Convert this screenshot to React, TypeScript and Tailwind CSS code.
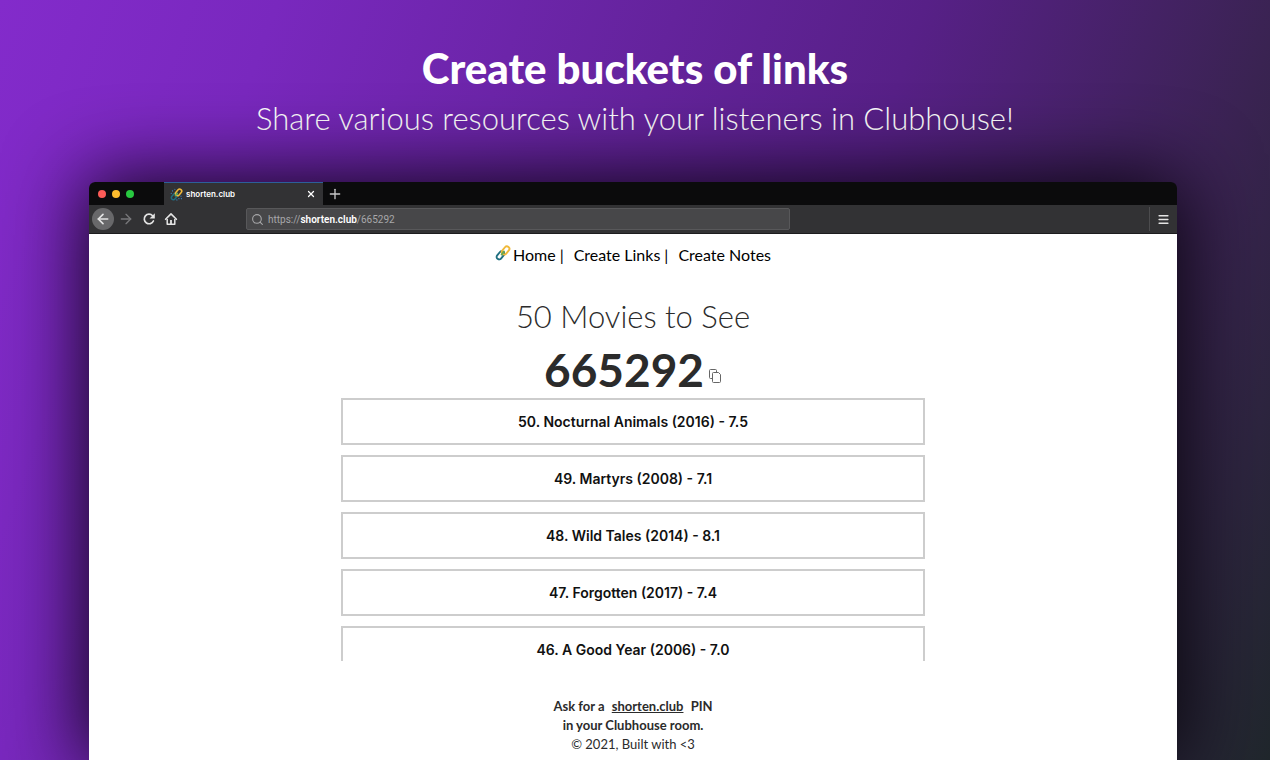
import { ArrowLeft, ArrowRight, Menu, Plus, Search, X } from "lucide-react";

const movies = [
  "50. Nocturnal Animals (2016) - 7.5",
  "49. Martyrs (2008) - 7.1",
  "48. Wild Tales (2014) - 8.1",
  "47. Forgotten (2017) - 7.4",
  "46. A Good Year (2006) - 7.0",
];

function ChainIcon({ className, sparks }: { className?: string; sparks?: boolean }) {
  return (
    <svg viewBox="0 0 16 16" fill="none" strokeWidth="1.9" className={className} aria-hidden="true">
      <rect x="0.9" y="7.9" width="9" height="5" rx="2.5" transform="rotate(-50 5.4 10.4)" stroke="#1f6f80" />
      <rect x="6.1" y="2.9" width="9" height="5" rx="2.5" transform="rotate(-50 10.6 5.4)" stroke="#f0b93a" />
      <path d="M6.6 9.6 9 6.6" stroke="#6aa84f" strokeLinecap="round" />
      {sparks && (
        <path
          d="M3 3.5v.1M6 1.5v.1M1.5 6.5v.1M13.5 10v.1M11 13v.1M8.5 14.6v.1M14 13v.1"
          stroke="#3a8fd0"
          strokeWidth="1.4"
          strokeLinecap="round"
        />
      )}
    </svg>
  );
}

function CopyIcon() {
  return (
    <svg viewBox="0 0 14 16" fill="none" stroke="#666" className="h-4 w-[14px]" aria-hidden="true">
      <path d="M4.5 10.5h-2a1 1 0 0 1-1-1v-7a1 1 0 0 1 1-1h5a1 1 0 0 1 1 1v2" />
      <path d="M5.5 4.5h5l2 2v7a1 1 0 0 1-1 1h-6a1 1 0 0 1-1-1v-8a1 1 0 0 1 1-1Z" />
    </svg>
  );
}

function ReloadIcon() {
  return (
    <svg viewBox="0 0 14 14" fill="none" className="size-[14px]" aria-hidden="true">
      <path d="M11.4 9A4.8 4.8 0 1 1 10.6 3.7" stroke="currentColor" strokeWidth="1.7" strokeLinecap="round" />
      <path d="M12.8 1.2v5.2H7.6Z" fill="currentColor" />
    </svg>
  );
}

function HomeIcon() {
  return (
    <svg viewBox="0 0 14 14" fill="none" stroke="currentColor" className="size-[14px]" aria-hidden="true">
      <path d="M1.6 7.3 7 1.9l5.4 5.4" strokeWidth="1.6" strokeLinecap="round" strokeLinejoin="round" />
      <path d="M3.2 7v5.3h7.6V7" strokeWidth="1.5" strokeLinejoin="round" />
      <path d="M7 8v4" strokeWidth="1.8" />
    </svg>
  );
}

function BrowserBar() {
  return (
    <div className="font-['Inter',sans-serif]">
      <div className="flex h-[23px] items-stretch bg-[#0b0b0c]">
        <div className="flex w-[75px] items-center gap-1.5 pl-[9px]">
          <span className="size-2 rounded-full bg-[#fc5b57]" />
          <span className="size-2 rounded-full bg-[#fdbc2e]" />
          <span className="size-2 rounded-full bg-[#28c840]" />
        </div>
        <div className="flex w-[159px] items-center border-t border-[#2c5f99] bg-[#323234] pr-[7px] pl-1.5 text-white">
          <ChainIcon className="size-[13px]" sparks />
          <span className="ml-[3px] flex-1 text-[8px] font-semibold">shorten.club</span>
          <button aria-label="Close tab">
            <X className="size-[10px]" strokeWidth={3} />
          </button>
        </div>
        <button aria-label="New tab" className="px-1 text-[#c8c8c8]">
          <Plus className="size-4" />
        </button>
      </div>
      <div className="flex h-[29px] items-center border-b border-[#1c1c1e] bg-[#323234] text-[#e4e4e4]">
        <button aria-label="Back" className="ml-[3px] flex size-[22px] items-center justify-center rounded-full bg-[#68686a]">
          <ArrowLeft className="size-4" strokeWidth={2.5} />
        </button>
        <button aria-label="Forward" disabled className="ml-1 text-[#77777a]">
          <ArrowRight className="size-4" />
        </button>
        <button aria-label="Reload" className="ml-2">
          <ReloadIcon />
        </button>
        <button aria-label="Home" className="ml-2">
          <HomeIcon />
        </button>
        <div className="ml-[68px] flex h-[22px] w-1/2 items-center rounded-xs border border-[#58585a] bg-[#474749] px-1 font-['Roboto',sans-serif] text-[10px] text-[#a8a8aa]">
          <Search className="mr-1 size-[13px]" />
          <span>
            https://<span className="font-semibold text-white">shorten.club</span>/665292
          </span>
        </div>
        <button aria-label="Menu" className="ml-auto flex h-6 w-7 items-center justify-center border-l border-[#4c4c4e]">
          <Menu className="size-[13px]" strokeWidth={3} />
        </button>
      </div>
    </div>
  );
}

export default function App() {
  return (
    <div className="flex h-screen flex-col overflow-hidden bg-[linear-gradient(110deg,#832bcb_0%,#7928be_18%,#572087_60%,#3a2352_83%,#20272c_100%)] font-['Lato',sans-serif]">
      <header className="flex flex-col items-center pt-[42px] pb-10 text-center text-white">
        <h1 className="text-[42px] leading-[52px] font-black">Create buckets of links</h1>
        <p className="text-[31px] leading-[48px] font-light">Share various resources with your listeners in Clubhouse!</p>
      </header>

      <div className="mr-[93px] ml-[89px] flex flex-1 flex-col rounded-t-md shadow-[0_0_80px_4px_rgba(0,0,0,0.9)]">
        <div className="overflow-hidden rounded-t-md">
          <BrowserBar />
        </div>
        <main className="flex flex-1 flex-col items-center bg-white text-[#2b2b2b]">
          <nav className="flex items-center pt-[9px] text-base leading-6 text-black">
            <a href="#home" className="flex items-center">
              <ChainIcon className="mr-0.5 mb-1 size-4" />
              Home
            </a>
            <span className="mr-2.5 ml-1">|</span>
            <a href="#links">Create Links</a>
            <span className="mr-2.5 ml-1">|</span>
            <a href="#notes">Create Notes</a>
          </nav>

          <h2 className="mt-[29px] text-[31px] leading-10 font-light">50 Movies to See</h2>
          <div className="mt-1.5 flex items-end gap-1">
            <span className="text-[46px] leading-[56px] font-bold">665292</span>
            <button aria-label="Copy PIN" className="pb-3.5">
              <CopyIcon />
            </button>
          </div>

          <ul className="flex h-[263px] w-[584px] max-w-full flex-col gap-2.5 overflow-hidden font-['Inter',sans-serif]">
            {movies.map((movie) => (
              <li key={movie} className="shrink-0">
                <a
                  href="#movie"
                  className="flex h-[47px] items-center justify-center border-2 border-[#cdcdcd] text-[14px] font-semibold text-[#111]"
                >
                  {movie}
                </a>
              </li>
            ))}
          </ul>

          <footer className="mt-9 text-center text-[13px] leading-[19px]">
            <p className="font-bold">
              Ask for a <a href="#shorten" className="mx-1 underline">shorten.club</a> PIN
              <br />
              in your Clubhouse room.
            </p>
            <p>© 2021, Built with &lt;3</p>
          </footer>
        </main>
      </div>
    </div>
  );
}
